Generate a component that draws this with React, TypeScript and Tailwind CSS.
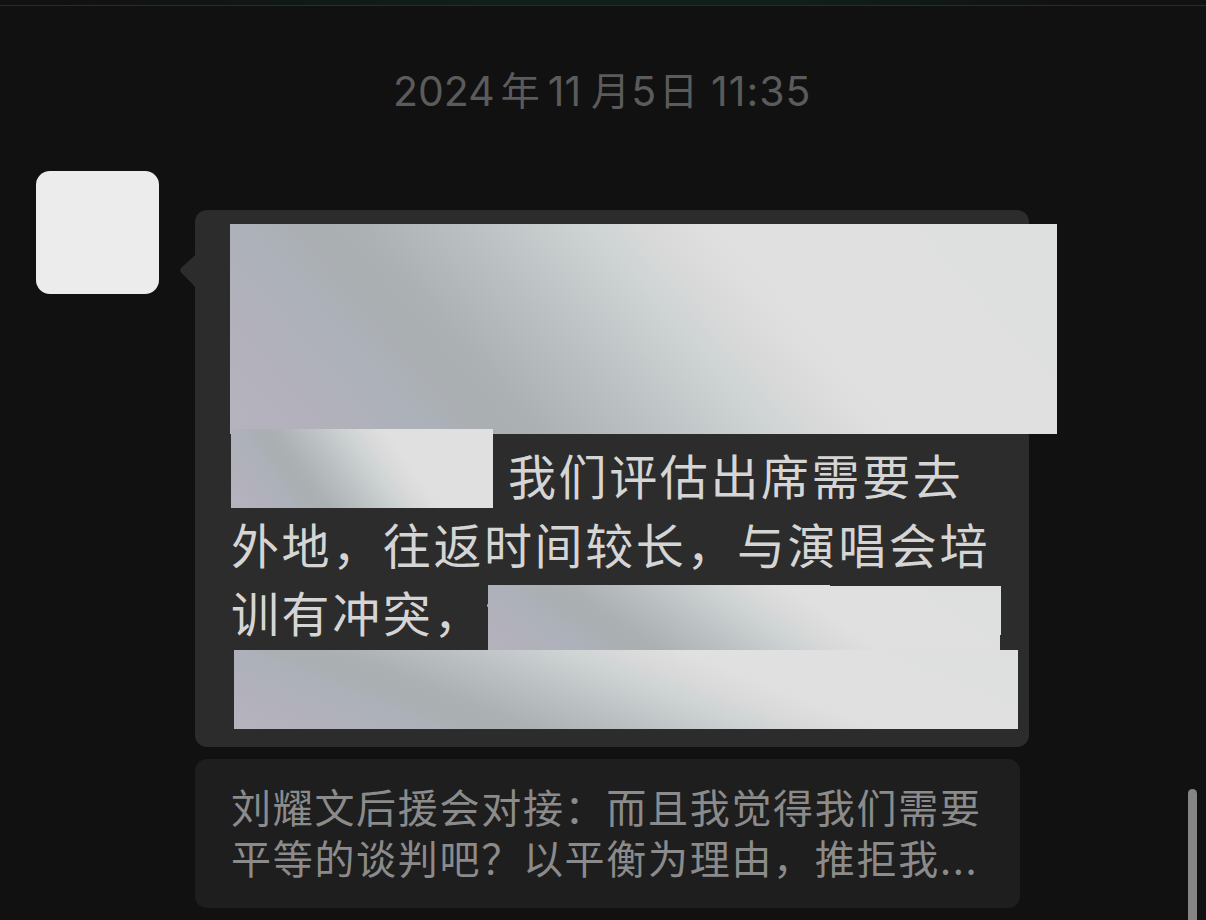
import type { ReactNode } from "react";

const cjk = "font-['Noto_Sans_CJK_SC',sans-serif]";

// Same colour ramp on every mask, only the angle follows the block's proportions
const masks = {
  large:
    "bg-[linear-gradient(48.6deg,#b5b3be_0%,#b2b1bb_11%,#adb1ba_19%,#aaafb1_27%,#acb1b3_31%,#babfc1_41%,#cfd4d5_54%,#d9d9d9_59%,#e0e0e0_66%,#e0e0e0_84%,#dde0de_89%,#dde0de_100%)]",
  small:
    "bg-[linear-gradient(55deg,#b5b3be_0%,#b2b1bb_11%,#adb1ba_19%,#aaafb1_27%,#acb1b3_31%,#babfc1_41%,#cfd4d5_54%,#d9d9d9_59%,#e0e0e0_66%,#e0e0e0_86%,#dfe0df_100%)]",
  medium:
    "bg-[linear-gradient(35deg,#b5b3be_0%,#b2b1bb_11%,#adb1ba_19%,#aaafb1_27%,#acb1b3_31%,#babfc1_41%,#cfd4d5_54%,#d9d9d9_59%,#e0e0e0_66%,#e0e0e0_84%,#dde0de_89%,#dde0de_100%)]",
  wide:
    "bg-[linear-gradient(22deg,#b5b3be_0%,#b2b1bb_11%,#adb1ba_19%,#aaafb1_27%,#acb1b3_31%,#babfc1_41%,#cfd4d5_54%,#d9d9d9_59%,#e0e0e0_66%,#e0e0e0_84%,#dde0de_89%,#dde0de_100%)]",
};

const Line = ({ children, className = "" }: { children: ReactNode; className?: string }) => (
  <p className={`whitespace-nowrap text-[48px] leading-[68px] tracking-[2.6px] text-[#d5d5d5] ${className}`}>
    {children}
  </p>
);

const Timestamp = () => (
  <div className="flex h-[50px] items-center pl-[393px] text-[41px] leading-[50px] text-[#5b5b5b] font-['Inter','Noto_Sans_CJK_SC',sans-serif]">
    <span>2024</span>
    <span className="ml-[6px] text-[39px]">年</span>
    <span className="ml-[8px]">11</span>
    <span className="ml-[10px] text-[39px]">月</span>
    <span className="ml-px">5</span>
    <span className="ml-[3px] text-[39px]">日</span>
    <span className="ml-[13px] tracking-[1px]">11:35</span>
  </div>
);

const MessageBubble = () => (
  <div className="relative h-[537px] w-[834px] rounded-[12px] bg-[#2c2c2c] pt-[14px] pl-[35px]">
    {/* Tail */}
    <svg className="absolute top-[43px] -left-[15px] h-[36px] w-[16px]" viewBox="0 0 16 36" fill="#2c2c2c">
      <path d="M16 0V36C15 34 14 32.5 12 30.5L1.5 20Q-1 17 1.5 14.5L12 5C14 3.5 15 2 16 0Z" />
    </svg>

    <div className={`h-[210px] w-[827px] ${masks.large}`} />

    <div className="relative -mt-[5px] ml-px flex h-[79px]">
      <div className={`w-[262px] shrink-0 ${masks.small}`} />
      <Line className="mt-[11px] ml-[15px]">我们评估出席需要去</Line>
    </div>

    <Line className="mt-px ml-px">外地，往返时间较长，与演唱会培</Line>

    <div className="ml-px flex h-[73px] items-end">
      <Line className="mb-[5px] w-[256px]">训有冲突，</Line>
      <div className="mb-[43px] h-[3px] w-px shrink-0 bg-[#999999]" />
      <div
        className={`-mb-[14px] h-[79px] w-[513px] shrink-0 [clip-path:polygon(0_0,342px_0,342px_1px,513px_1px,513px_50px,512px_50px,512px_79px,0_79px)] ${masks.medium}`}
      />
    </div>

    <div className={`relative ml-[4px] h-[79px] w-[784px] ${masks.wide}`} />
  </div>
);

const QuotedMessage = () => (
  <div className="mt-[12px] h-[149px] w-[825px] rounded-[12px] bg-[#1e1e1e] pt-[22px] pl-[36px] text-[40px] leading-[51px] tracking-[1.7px] whitespace-nowrap text-[#8b8b8b]">
    <p>刘耀文后援会对接：而且我觉得我们需要</p>
    <p>平等的谈判吧？以平衡为理由，推拒我...</p>
  </div>
);

const App = () => {
  return (
    <div lang="zh-CN" className={`relative h-[920px] w-[1206px] overflow-hidden bg-[#111111] ${cjk}`}>
      <div className="h-[6px] border-b border-[#2b2b2b] bg-[linear-gradient(90deg,#111111_5%,#102018_42%,#102018_65%,#111111_90%)]" />

      <div className="pt-[60px]">
        <Timestamp />
      </div>

      <div className="mt-[55px] flex pl-[36px]">
        <div className="h-[123px] w-[123px] shrink-0 rounded-[14px] bg-[#ececec]" />
        <div className="mt-[39px] ml-[36px]">
          <MessageBubble />
          <QuotedMessage />
        </div>
      </div>

      {/* Scrollbar */}
      <div className="absolute top-[789px] right-[9px] h-[180px] w-[9px] rounded-full bg-[#858585]" />
    </div>
  );
};

export default App;
